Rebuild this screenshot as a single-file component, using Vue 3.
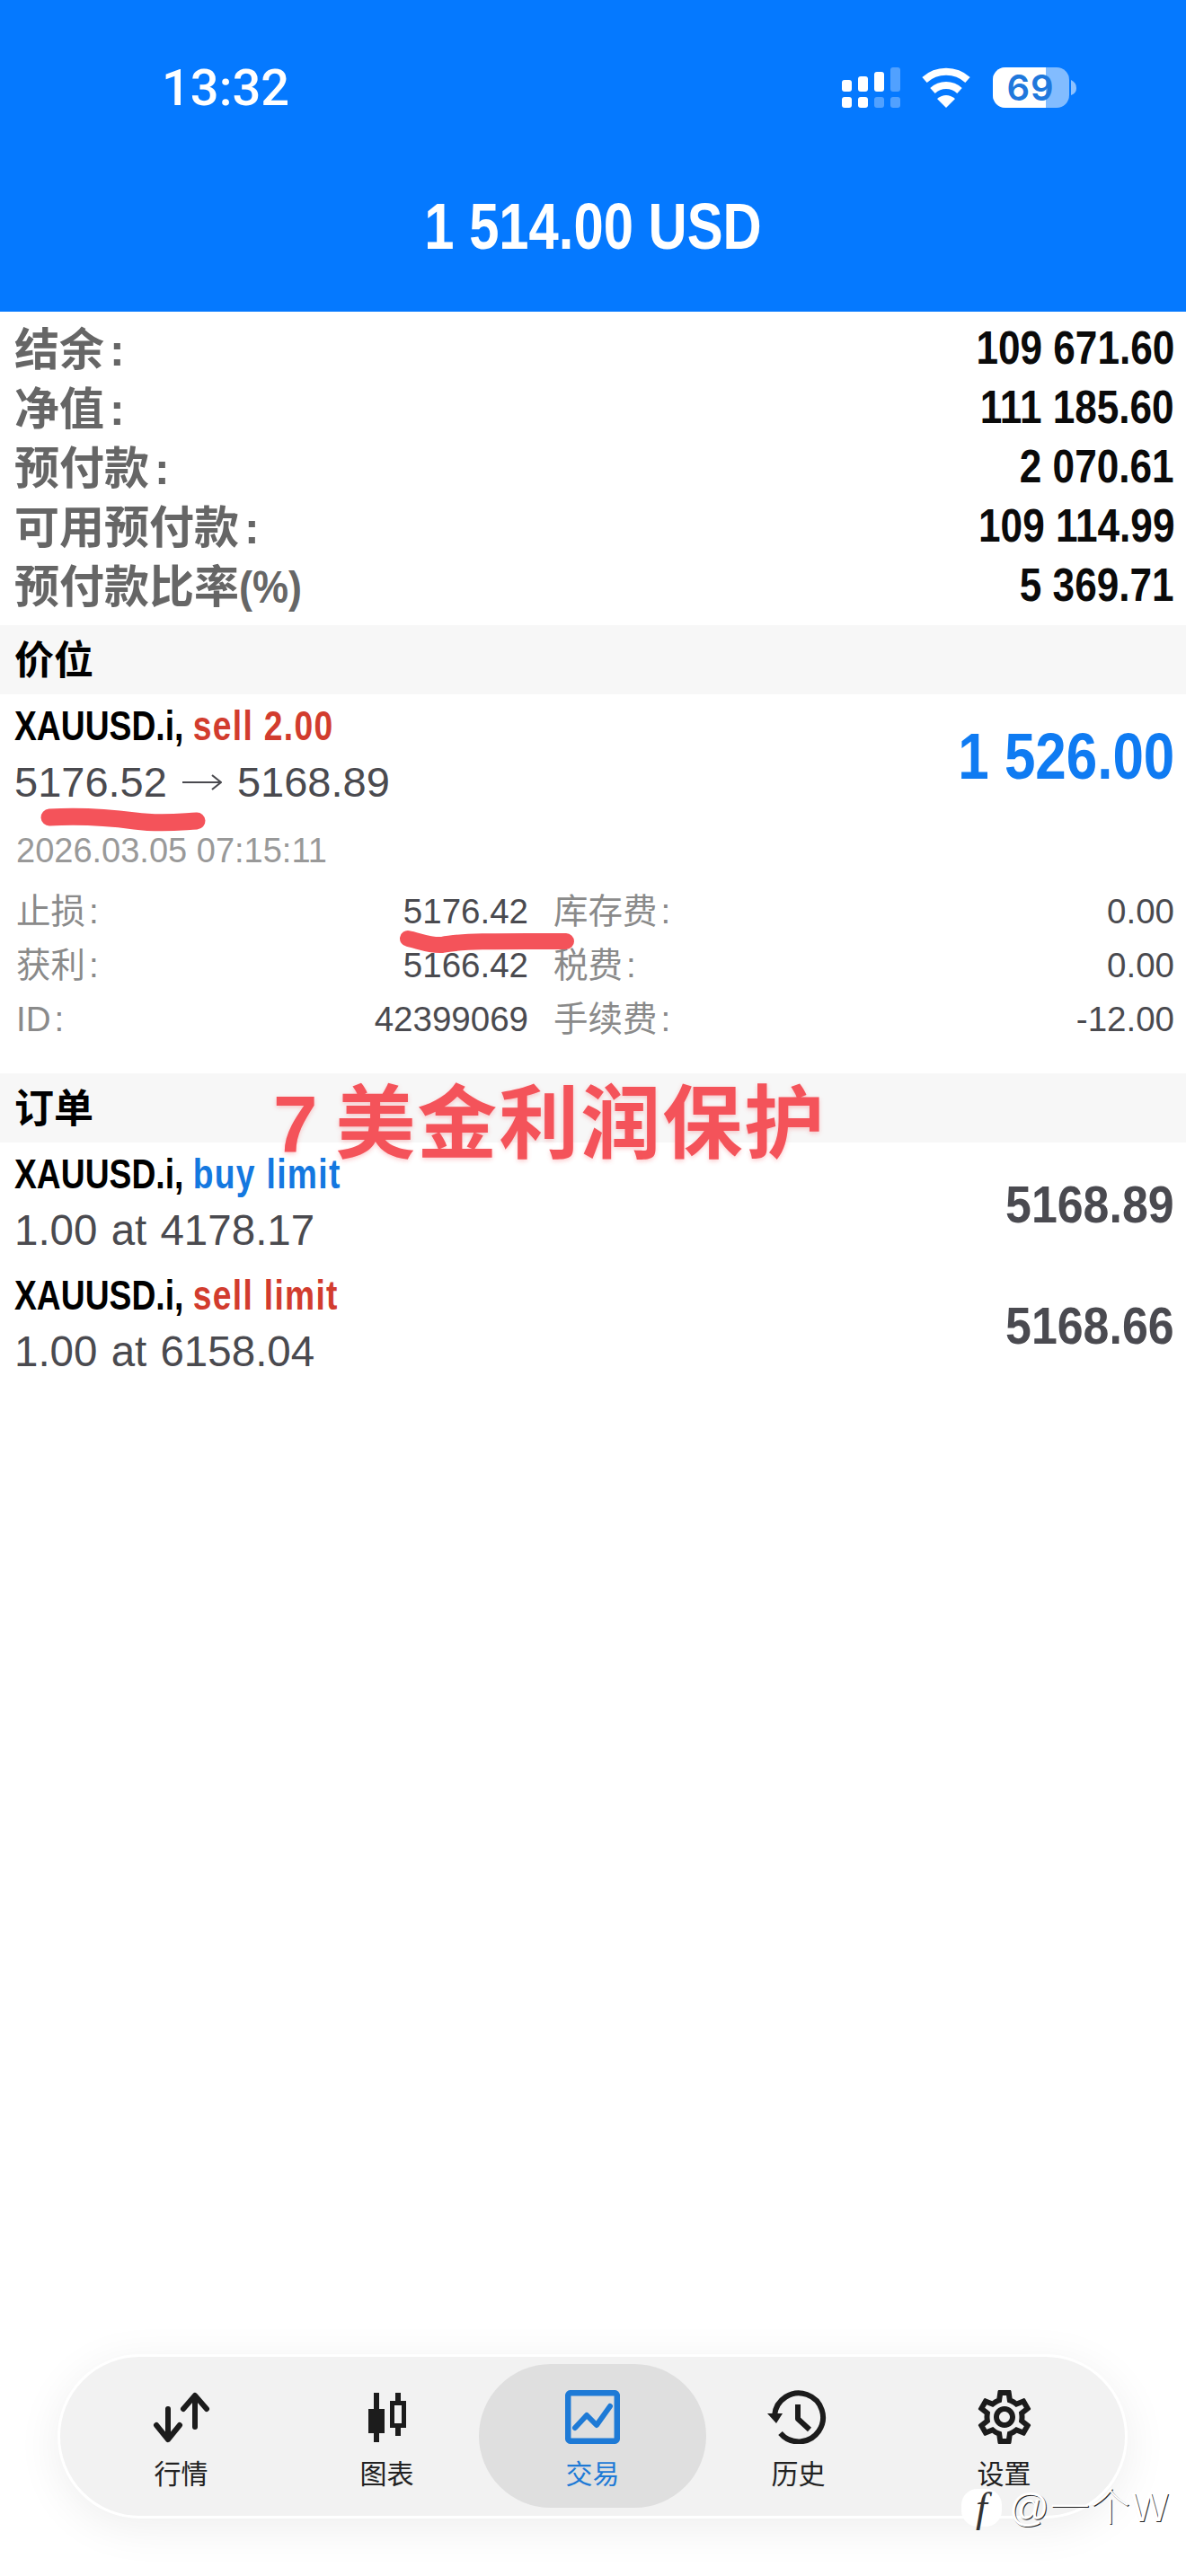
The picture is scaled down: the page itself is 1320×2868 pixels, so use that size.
<template>
  <div class="page">
    <!-- 顶部蓝色区域 -->
    <header class="header">
      <div class="status">
        <span class="time">13:32</span>
        <svg class="status-icons" width="275" height="55" viewBox="0 0 275 55">
          <defs>
            <clipPath id="batt-fill"><rect x="175" y="4" width="59" height="45" /></clipPath>
          </defs>
          <g fill="#fff">
            <rect x="7" y="18" width="11" height="13" rx="3" />
            <rect x="25" y="14" width="11" height="17" rx="3" />
            <rect x="43" y="9" width="11" height="22" rx="3" />
            <rect x="7" y="37" width="11" height="12" rx="3" />
            <rect x="25" y="37" width="11" height="12" rx="3" />
          </g>
          <g fill="#fff" opacity="0.3">
            <rect x="61" y="4" width="11" height="27" rx="3" />
            <rect x="43" y="37" width="11" height="12" rx="3" />
            <rect x="61" y="37" width="11" height="12" rx="3" />
          </g>
          <g fill="none" stroke="#fff" stroke-width="8">
            <path d="M99 18A36 36 0 0 1 147 18" />
            <path d="M108 30A22 22 0 0 1 138 30" />
          </g>
          <path d="M113 39Q123 31 133 39L123 49Z" fill="#fff" />
          <rect x="175" y="4" width="85" height="45" rx="14" fill="#fff" opacity="0.5" />
          <rect x="175" y="4" width="85" height="45" rx="14" fill="#fff" clip-path="url(#batt-fill)" />
          <path d="M262 18Q268 21 268 27T262 35Z" fill="#fff" opacity="0.55" />
          <text x="217" y="41" class="batt-text" text-anchor="middle">69</text>
        </svg>
      </div>
      <h1 class="balance">1 514.00 USD</h1>
    </header>

    <main class="content">
      <!-- 账户汇总 -->
      <section class="summary">
        <div class="summary-row" v-for="row in summary" :key="row.label">
          <span class="summary-label">{{ row.label }}<span v-if="row.unit" class="unit">{{ row.unit }}</span><span v-else class="colon">:</span></span>
          <span class="summary-value">{{ row.value }}</span>
        </div>
      </section>

      <div class="band">价位</div>
      <section class="position">
        <div class="trade-row position-row">
          <div>
            <div class="trade-title">XAUUSD.i, <span class="sell">sell 2.00</span></div>
            <div class="trade-sub price-move">
              <span>5176.52</span>
              <svg width="44" height="22" viewBox="0 0 44 22" fill="none" stroke="#4a4a4f" stroke-width="2.2">
                <path d="M0 11H42M33 3L43 11L33 19" />
              </svg>
              <span>5168.89</span>
            </div>
          </div>
          <span class="profit">1 526.00</span>
        </div>
        <div class="date">2026.03.05 07:15:11</div>
        <div class="details">
          <template v-for="d in details" :key="d.label">
            <span class="d-label">{{ d.label }}<span class="d-colon">:</span></span>
            <span class="d-value right">{{ d.value }}</span>
            <span class="d-label second">{{ d.label2 }}<span class="d-colon">:</span></span>
            <span class="d-value right">{{ d.value2 }}</span>
          </template>
        </div>
      </section>

      <div class="band">订单</div>
      <section>
        <div class="trade-row order-row" v-for="o in orders" :key="o.sub">
          <div>
            <div class="trade-title">XAUUSD.i, <span :class="o.side">{{ o.type }}</span></div>
            <div class="trade-sub order-sub">{{ o.sub }}</div>
          </div>
          <span class="order-price">{{ o.price }}</span>
        </div>
      </section>
    </main>

    <!-- 底部导航 -->
    <nav class="nav">
      <div class="nav-item" v-for="item in nav" :key="item.label" :class="{ active: item.active }">
        <svg v-if="item.icon === 'quotes'" width="66" height="60" viewBox="0 0 66 60" fill="none" stroke="#1c1c1c" stroke-width="6" stroke-linecap="round" stroke-linejoin="round">
          <path d="M18 21V55M5 39L18 55L31 39" />
          <path d="M48 7V41M35 21L48 6L61 21" />
        </svg>
        <svg v-else-if="item.icon === 'chart'" width="60" height="60" viewBox="0 0 60 60">
          <g fill="#1c1c1c">
            <rect x="15" y="3" width="6" height="55" />
            <rect x="9" y="21" width="18" height="27" />
            <rect x="39" y="3" width="6" height="48" />
          </g>
          <rect x="35.5" y="14.5" width="13" height="25" fill="#f2f2f2" stroke="#1c1c1c" stroke-width="5" />
        </svg>
        <svg v-else-if="item.icon === 'trade'" width="61" height="60" viewBox="0 0 61 60" fill="none" stroke="#1e7ad6" stroke-width="6.5" stroke-linecap="round" stroke-linejoin="round">
          <rect x="3.2" y="3.2" width="54.6" height="53.6" rx="3" />
          <path d="M11 42L24 28L35 39L50 18" stroke-width="6" />
        </svg>
        <svg v-else-if="item.icon === 'history'" width="72" height="60" viewBox="0 0 72 60" fill="none" stroke="#1c1c1c" stroke-width="6" stroke-linejoin="round">
          <path d="M9.1 28A27 27 0 1 1 15.5 48" />
          <path d="M35 16V32L48 44" />
          <path d="M1 26L18 26L11 37Z" fill="#1c1c1c" stroke="none" />
        </svg>
        <svg v-else width="60" height="60" viewBox="2 2 20 20" fill="#1c1c1c">
          <path d="M19.43 12.98c.04-.32.07-.64.07-.98 0-.34-.03-.66-.07-.98l2.11-1.65c.19-.15.24-.42.12-.64l-2-3.46c-.09-.16-.26-.25-.44-.25-.06 0-.12.01-.17.03l-2.49 1c-.52-.4-1.08-.73-1.69-.98l-.38-2.65C14.46 2.18 14.25 2 14 2h-4c-.25 0-.46.18-.49.42l-.38 2.65c-.61.25-1.17.59-1.69.98l-2.49-1c-.06-.02-.12-.03-.18-.03-.17 0-.34.09-.43.25l-2 3.46c-.13.22-.07.49.12.64l2.11 1.65c-.04.32-.07.65-.07.98 0 .33.03.66.07.98l-2.11 1.65c-.19.15-.24.42-.12.64l2 3.46c.09.16.26.25.44.25.06 0 .12-.01.17-.03l2.49-1c.52.4 1.08.73 1.69.98l.38 2.65c.03.24.24.42.49.42h4c.25 0 .46-.18.49-.42l.38-2.65c.61-.25 1.17-.59 1.69-.98l2.49 1c.06.02.12.03.18.03.17 0 .34-.09.43-.25l2-3.46c.12-.22.07-.49-.12-.64l-2.11-1.65zm-1.98-1.71c.04.31.05.52.05.73 0 .21-.02.43-.05.73l-.14 1.13.89.7 1.08.84-.7 1.21-1.27-.51-1.04-.42-.9.68c-.43.32-.84.56-1.25.73l-1.06.43-.16 1.13-.2 1.35h-1.4l-.19-1.35-.16-1.13-1.06-.43c-.43-.18-.83-.41-1.23-.71l-.91-.7-1.06.43-1.27.51-.7-1.21 1.08-.84.89-.7-.14-1.13c-.03-.31-.05-.54-.05-.74s.02-.43.05-.73l.14-1.13-.89-.7-1.08-.84.7-1.21 1.27.51 1.04.42.9-.68c.43-.32.84-.56 1.25-.73l1.06-.43.16-1.13.2-1.35h1.39l.19 1.35.16 1.13 1.06.43c.43.18.83.41 1.23.71l.91.7 1.06-.43 1.27-.51.7 1.21-1.07.85-.89.7.14 1.13zM12 8c-2.21 0-4 1.79-4 4s1.79 4 4 4 4-1.79 4-4-1.79-4-4-4zm0 6c-1.1 0-2-.9-2-2s.9-2 2-2 2 .9 2 2-.9 2-2 2z" />
        </svg>
        <span class="nav-label">{{ item.label }}</span>
      </div>
    </nav>

    <!-- 截图上的手写标注 -->
    <svg class="scribbles" width="1320" height="2868" viewBox="0 0 1320 2868" fill="none" stroke="#f4535a" stroke-linecap="round">
      <path d="M55 910C90 908 120 910 150 914S200 915 219 914" stroke-width="19" />
      <path d="M454 1045C465 1047 478 1053 492 1052C515 1047 570 1048 630 1048" stroke-width="18" />
    </svg>
    <div class="note">7 美金利润保护</div>

    <div class="watermark">
      <span class="wm-logo">f</span>
      <span class="wm-text">@一个W</span>
    </div>
  </div>
</template>

<script setup>
const summary = [
  { label: '结余', value: '109 671.60' },
  { label: '净值', value: '111 185.60' },
  { label: '预付款', value: '2 070.61' },
  { label: '可用预付款', value: '109 114.99' },
  { label: '预付款比率', unit: '(%)', value: '5 369.71' },
]

const details = [
  { label: '止损', value: '5176.42', label2: '库存费', value2: '0.00' },
  { label: '获利', value: '5166.42', label2: '税费', value2: '0.00' },
  { label: 'ID', value: '42399069', label2: '手续费', value2: '-12.00' },
]

const orders = [
  { side: 'buy', type: 'buy limit', sub: '1.00 at 4178.17', price: '5168.89' },
  { side: 'sell', type: 'sell limit', sub: '1.00 at 6158.04', price: '5168.66' },
]

const nav = [
  { label: '行情', icon: 'quotes' },
  { label: '图表', icon: 'chart' },
  { label: '交易', icon: 'trade', active: true },
  { label: '历史', icon: 'history' },
  { label: '设置', icon: 'settings' },
]
</script>

<style>
html,
body {
  margin: 0;
  background: #fff;
}
</style>

<style scoped>
.page {
  position: relative;
  width: 1320px;
  min-height: 2868px;
  display: flex;
  flex-direction: column;
  overflow: hidden;
  background: #fff;
  font-family: "Liberation Sans", "Noto Sans CJK SC", sans-serif;
}

/* header */
.header {
  height: 347px;
  background: #0579ff;
  color: #fff;
}

.status {
  display: flex;
  justify-content: space-between;
  align-items: center;
  height: 56px;
  padding: 70px 115px 0 180px;
}

.time {
  font-family: Roboto, sans-serif;
  font-weight: 500;
  font-size: 56px;
  line-height: 56px;
}

.batt-text {
  font-family: Inter, sans-serif;
  font-weight: 600;
  font-size: 40px;
  letter-spacing: 1px;
  fill: #1f78dc;
}

.balance {
  margin: 86px 0 0;
  text-align: center;
  font-size: 72px;
  line-height: 80px;
  font-weight: 700;
  transform: scaleX(0.83);
}

.content {
  flex: 1;
}

/* summary */
.summary {
  padding: 8px 13px 11px 16px;
}

.summary-row {
  display: flex;
  justify-content: space-between;
  align-items: center;
  height: 66px;
}

.summary-label {
  padding-top: 3px;
  font-size: 50px;
  line-height: 60px;
  font-weight: 700;
  color: #666;
  white-space: nowrap;
}

.colon {
  margin-left: 6px;
}

.unit {
  display: inline-block;
  transform: scaleX(0.9);
  transform-origin: left center;
}

.summary-value {
  font-size: 51px;
  line-height: 60px;
  font-weight: 700;
  color: #0a0a0a;
  transform: scaleX(0.865);
  transform-origin: right center;
}

.band {
  height: 77px;
  padding-left: 16px;
  background: #f7f7f7;
  font-size: 44px;
  font-weight: 700;
  line-height: 79px;
  color: #000;
}

/* trade rows */
.trade-row {
  display: flex;
  justify-content: space-between;
  align-items: center;
  padding: 0 13px 0 16px;
}

.order-row {
  height: 135px;
  padding-bottom: 9px;
  box-sizing: border-box;
}

.trade-title {
  height: 70px;
  font-size: 46px;
  line-height: 70px;
  font-weight: 700;
  color: #000;
  white-space: nowrap;
  transform: scaleX(0.81);
  transform-origin: left center;
}

.sell,
.buy {
  letter-spacing: 1.6px;
}

.sell {
  color: #d23c2e;
}

.buy {
  color: #1478e0;
}

.trade-sub {
  height: 56px;
  font-size: 47px;
  line-height: 56px;
  color: #4a4a4f;
}

.price-move {
  display: flex;
  align-items: center;
  gap: 17px;
}

.order-sub {
  font-size: 47.5px;
  word-spacing: 2px;
}

.profit {
  padding-top: 12px;
  font-size: 72px;
  font-weight: 700;
  color: #0f7bf2;
  transform: scaleX(0.86);
  transform-origin: right center;
}

.order-price {
  padding-top: 11px;
  font-size: 58px;
  font-weight: 700;
  color: #4a4a50;
  transform: scaleX(0.895);
  transform-origin: right center;
}

.date {
  margin-top: 18px;
  padding-left: 18px;
  font-size: 38px;
  line-height: 60px;
  color: #999;
}

.details {
  display: grid;
  grid-template-columns: 120px 450px 1fr auto;
  grid-auto-rows: 60px;
  align-items: center;
  margin: 8px 0 30px;
  padding: 0 13px 0 18px;
  font-size: 38.5px;
  line-height: 50px;
}

.d-label {
  color: #8a8a8a;
}

.d-colon {
  margin-left: 4px;
}

.second {
  padding-left: 28px;
}

.d-value {
  color: #4a4a4f;
}

.right {
  text-align: right;
}

/* bottom nav */
.nav {
  display: grid;
  grid-template-columns: repeat(5, 229px);
  margin: 0 65px 64px 64px;
  padding: 8px 20px 9px;
  border: 3px solid #fff;
  border-radius: 92px;
  background: #f2f2f2;
  box-shadow: 0 10px 50px rgba(0, 0, 0, 0.07);
}

.nav-item {
  height: 160px;
  padding-top: 29px;
  box-sizing: border-box;
  display: flex;
  flex-direction: column;
  align-items: center;
}

.nav-item.active {
  margin: 0 -12px;
  border-radius: 80px;
  background: #dfdfdf;
}

.nav-label {
  margin-top: 14px;
  font-size: 30px;
  line-height: 40px;
  color: #222;
}

.active .nav-label {
  color: #1e7ad6;
}

/* overlays */
.scribbles {
  position: absolute;
  left: 0;
  top: 0;
  pointer-events: none;
}

.note {
  position: absolute;
  left: 304px;
  top: 1199px;
  font-size: 89px;
  line-height: 104px;
  font-weight: 700;
  letter-spacing: 2px;
  word-spacing: -9px;
  color: #f4535a;
  text-shadow: 0 2px 5px rgba(245, 82, 90, 0.3);
  white-space: nowrap;
}

.watermark {
  position: absolute;
  left: 1070px;
  top: 2768px;
  display: flex;
  align-items: center;
  gap: 8px;
  color: #fff;
}

.wm-logo {
  width: 45px;
  height: 42px;
  border-radius: 18px;
  background: #fff;
  font-family: "Liberation Serif", serif;
  font-style: italic;
  font-size: 46px;
  line-height: 42px;
  text-align: center;
  color: #333;
}

.wm-text {
  font-size: 44px;
  line-height: 48px;
  font-weight: 300;
  letter-spacing: 1px;
  text-shadow: 1px 1px 0 #222;
  white-space: nowrap;
}
</style>
